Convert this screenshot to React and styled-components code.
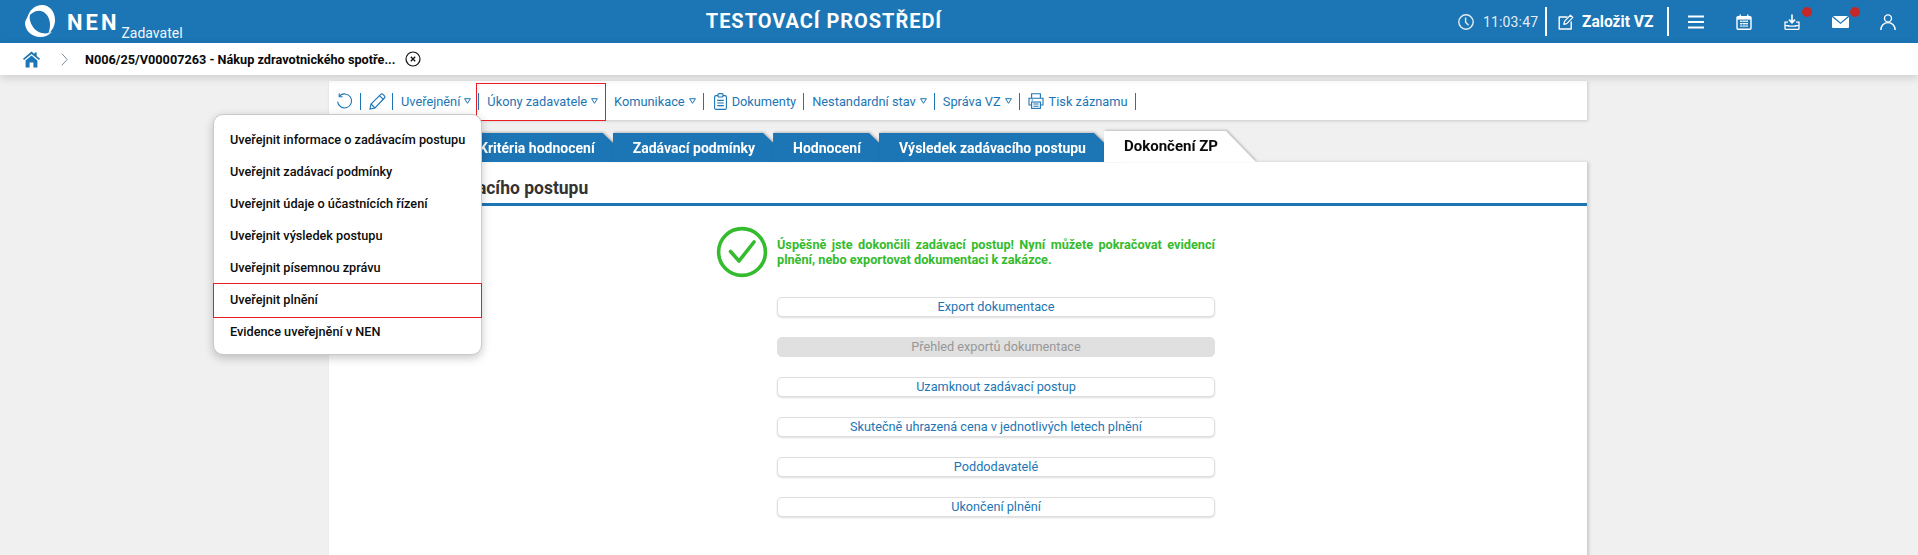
import React from "react";
import styled, { createGlobalStyle } from "styled-components";

const BLUE = "#1c75b4";
const GREEN = "#34bb2e";

const Global = createGlobalStyle`
  html, body { margin: 0; padding: 0; height: 555px; overflow: hidden; background: #f0f0f0; }
  body { font-family: Roboto, "Liberation Sans", sans-serif; font-size: 13px; }
  * { box-sizing: border-box; }
`;

const Page = styled.div`position: relative; height: 555px; overflow: hidden; background: #f0f0f0;`;

const Header = styled.header`
  height: 43px; background: ${BLUE}; color: #fff; display: flex; align-items: center;
`;
const Brand = styled.div`
  width: 193px; flex: none; display: flex; align-items: flex-start; height: 43px; padding: 5px 0 0 25px;
`;
const BrandName = styled.span`
  font-size: 22px; font-weight: 700; letter-spacing: 3px; line-height: 26px; margin: 5px 0 0 12px;
`;
const BrandRole = styled.span`
  font-size: 14px; line-height: 16px; margin: 20px 0 0 2px; color: #f2f7fb;
`;
const EnvTitle = styled.h1`
  flex: 1; margin: 0; text-align: center; font-size: 20px; font-weight: 700; letter-spacing: .95px; line-height: 43px;
`;
const HeaderTools = styled.div`
  flex: none; width: 463px; height: 43px; display: flex; align-items: center; padding-left: 3px;
`;
const Clock = styled.div`
  display: flex; align-items: center; gap: 9px; font-size: 14px; letter-spacing: .15px; color: #e3edf5; width: 87px;
`;
const HeaderRule = styled.i`width: 2px; height: 29px; background: #fff; flex: none;`;
const CreateLink = styled.div`
  display: flex; align-items: center; gap: 8px; font-size: 15.6px; font-weight: 700; padding: 0 0 0 11px; width: 120px; white-space: nowrap;
`;
const HeaderIcons = styled.div`
  display: flex; align-items: center; margin-left: 3px;
`;
const IconSlot = styled.div`
  position: relative; width: 48px; display: flex; justify-content: center; align-items: center; height: 43px; flex: none;
`;
const Dot = styled.i`
  position: absolute; left: 34px; top: 7px; width: 10px; height: 10px; border-radius: 50%; background: #c62828;
`;

const Crumbs = styled.nav`
  position: relative; height: 32px; background: #fff; box-shadow: 0 3px 8px rgba(0,0,0,.14);
  display: flex; align-items: center; padding-left: 23px;
`;
const CrumbTitle = styled.b`
  font-size: 12.7px; font-weight: 700; color: #0a0a0a; margin-left: 17px; width: 320px; white-space: nowrap;
`;

const Column = styled.main`
  width: 1258px; margin: 6px 0 0 329px;
`;
const Toolbar = styled.div`
  height: 39px; background: #fff; box-shadow: 1px 1px 3px rgba(0,0,0,.16);
  display: flex; align-items: center; padding: 1px 0 0 7px; color: ${BLUE};
`;
const ToolItem = styled.div`
  position: relative; height: 17px; display: flex; align-items: center; gap: ${p => p.$gap ?? 4}px;
  padding: ${p => p.$pad ?? "0 7px 0 8px"}; border-right: 1px solid ${BLUE}; white-space: nowrap; font-size: 12.8px; line-height: 17px;
  &::after {
    content: ""; display: ${p => (p.$marked ? "block" : "none")};
    position: absolute; left: -3px; right: -1px; top: -10px; bottom: -11px; border: 1px solid #ea1c24;
  }
`;

const Tabs = styled.div`
  height: 31px; margin-top: 11px; display: flex; align-items: flex-end; padding-left: 130px;
`;
const TabShell = styled.div`
  flex: none; margin-right: -20px; filter: drop-shadow(1px -1px 1px rgba(0,0,0,.22));
`;
const TabFace = styled.div`
  height: ${p => (p.$active ? 31 : 29)}px;
  padding: 0 38px 0 20px;
  background: ${p => (p.$active ? "#fff" : BLUE)};
  color: ${p => (p.$active ? "#0a0a0a" : "#fff")};
  font-size: ${p => (p.$active ? 15 : 14)}px; font-weight: 700; white-space: nowrap;
  line-height: ${p => (p.$active ? 30 : 31)}px;
  clip-path: polygon(0 0, calc(100% - 30px) 0, 100% 100%, 0 100%);
`;

const Panel = styled.section`
  background: #fff; height: 400px; box-shadow: 2px 0 3px rgba(0,0,0,.16);
`;
const PanelTitle = styled.h2`
  margin: 0; height: 44px; border-bottom: 3px solid ${BLUE}; padding: 8px 0 0 14px;
  font-size: 17.5px; font-weight: 700; color: #333; line-height: 36px;
`;
const Body = styled.div`
  width: 500px; margin: 20px 0 0 387px;
`;
const Notice = styled.div`display: flex; align-items: flex-start;`;
const NoticeText = styled.p`
  margin: 11px 0 0 9px; width: 438px; color: ${GREEN}; font-size: 12.7px; font-weight: 700; line-height: 15px; text-align: justify;
`;
const Actions = styled.div`
  margin: 19px 0 0 61px; width: 438px; display: flex; flex-direction: column; gap: 20px;
`;
const Action = styled.button`
  height: 20px; padding: 0; border-radius: 5px; font-family: inherit; font-size: 12.7px; line-height: 18px;
  border: 1px solid ${p => (p.disabled ? "#e0e0e0" : "#dfdfdf")};
  background: ${p => (p.disabled ? "#e0e0e0" : "#fff")};
  color: ${p => (p.disabled ? "#979797" : BLUE)};
  box-shadow: ${p => (p.disabled ? "none" : "0 1px 2px rgba(0,0,0,.14)")};
`;

const Menu = styled.ul`
  position: absolute; left: 213px; top: 114px; width: 269px; margin: 0; padding: 9px 0 6px; list-style: none;
  background: #fff; border: 1px solid #c9c9c9; border-radius: 10px; box-shadow: 0 3px 10px rgba(0,0,0,.22);
`;
const MenuItem = styled.li`
  position: relative; height: 32px; line-height: 31px; padding-left: 16px; font-size: 12.7px; font-weight: 500; color: #0c0c0c; white-space: nowrap;
  &::after {
    content: ""; display: ${p => (p.$marked ? "block" : "none")};
    position: absolute; left: -1px; right: -1px; top: -1px; bottom: -2px; border: 1px solid #ea1c24;
  }
`;

const Svg = ({ w = 16, h = 16, vb, children, ...rest }) => (
  <svg width={w} height={h} viewBox={vb || `0 0 ${w} ${h}`} fill="none" style={{ flex: "none", display: "block" }} {...rest}>{children}</svg>
);

const Logo = () => (
  <Svg w={30} h={32} vb="0 0 30 32">
    <path fill="#fff" d="M2 14C4 5 10 0 17 0c8 0 13 7 13 15 0 6-3 11-7 14 3-6 3-15-2-20C15 3 7 6 2 14z" />
    <path fill="#fff" d="M5 9C1 13 0 17 0 19c1 8 8 13 15 13 5 0 9-2 12-5-7 3-15 1-19-5-3-4-4-9-3-13z" />
  </Svg>
);
const stroke = { stroke: "#fff", strokeWidth: 1.4, strokeLinecap: "round", strokeLinejoin: "round" };
const ClockIcon = () => (
  <Svg><circle cx="8" cy="8" r="7.2" stroke="#e3edf5" strokeWidth="1.4" /><path d="M7.6 3.6v4.6l3 3" stroke="#e3edf5" strokeWidth="1.4" /></Svg>
);
const EditIcon = () => (
  <Svg>
    <path {...stroke} d="M9 3H1.2v12h12V8" />
    <path {...stroke} strokeWidth="1.2" d="M5.8 10.4l.7-3L12.4 1.2l2.4 2.2-6 6.2z" />
  </Svg>
);
const BurgerIcon = () => (
  <Svg h={14}><path d="M0 1.5h16M0 7h16M0 12.5h16" stroke="#fff" strokeWidth="2.2" /></Svg>
);
const CalendarIcon = () => (
  <Svg>
    <rect x="1" y="2.6" width="14" height="12.6" rx="1" stroke="#fff" strokeWidth="1.4" />
    <path d="M1 3h14v2.6H1z" fill="#fff" />
    <path d="M4.2.4v3M11.8.4v3" stroke="#fff" strokeWidth="1.4" />
    <path d="M4 7.2h8M4 9.6h8M4 12h8M5.3 6.8v6M8 6.8v6M10.7 6.8v6" stroke="#fff" strokeWidth="1.2" strokeDasharray="1.3 1" />
  </Svg>
);
const InboxIcon = () => (
  <Svg>
    <path d="M8 .4v8.2M5 5.6l3 3.2 3-3.2" stroke="#fff" strokeWidth="1.6" />
    <path d="M4 8.2H1v6.2a1 1 0 0 0 1 1h12a1 1 0 0 0 1-1V8.2h-3M1 11.6h3.5v.6h7v-.6H15" stroke="#fff" strokeWidth="1.3" />
  </Svg>
);
const MailIcon = () => (
  <Svg w={17} h={12}>
    <path fill="#fff" d="M1 0h15L8.5 6.4zM0 1l8.5 7L17 1v10a1 1 0 0 1-1 1H1a1 1 0 0 1-1-1z" />
  </Svg>
);
const UserIcon = () => (
  <Svg>
    <circle cx="8" cy="4.4" r="3.5" stroke="#fff" strokeWidth="1.4" />
    <path d="M.8 16c0-4.4 3-7.4 7.2-7.4s7.2 3 7.2 7.4" stroke="#fff" strokeWidth="1.4" />
  </Svg>
);
const HomeIcon = () => (
  <Svg w={17} h={17}>
    <path fill={BLUE} d="M8.5.6l3 2.5V1.4h2.2v3.6L17 7.8l-1 1.2L8.5 2.9 1 9 0 7.8z" />
    <path fill={BLUE} d="M2.6 9.4l5.9-4.8 5.9 4.8v7.2h-4V11.4H6.6v5.2h-4z" />
  </Svg>
);
const Chevron = () => (
  <Svg w={7} h={13} style={{ marginLeft: 21, flex: "none", display: "block" }}>
    <path d="M.8.6l5.4 5.9-5.4 5.9" stroke="#7d8a96" strokeWidth="1" />
  </Svg>
);
const CloseIcon = () => (
  <Svg w={16} h={16}>
    <circle cx="8" cy="8" r="7" stroke="#111" strokeWidth="1.2" />
    <path d="M5.8 5.8l4.4 4.4M10.2 5.8l-4.4 4.4" stroke="#111" strokeWidth="1.3" />
  </Svg>
);
const blueS = { stroke: BLUE, strokeWidth: 1.1 };
const RefreshIcon = () => (
  <Svg w={17} h={17}>
    <path {...blueS} d="M3.4 3.2A7 7 0 1 1 1.6 8.6" />
    <path {...blueS} d="M3.2.6v3.2h3.4" />
  </Svg>
);
const PencilIcon = () => (
  <Svg w={17} h={17}>
    <path {...blueS} d="M1 16l1-5L11.8 1.4a1.6 1.6 0 0 1 2.2 0l1.4 1.4a1.6 1.6 0 0 1 0 2.2L6 15z" />
    <path {...blueS} d="M2 11l4 4M10.6 2.8l3.8 3.6" />
  </Svg>
);
const ClipIcon = () => (
  <Svg w={13} h={17}>
    <rect x=".6" y="2.6" width="11.8" height="13.8" rx="1.5" {...blueS} />
    <rect x="4" y=".6" width="5" height="3.4" rx="1" fill="#fff" {...blueS} />
    <path {...blueS} d="M3.2 7.4h6.6M3.2 10h6.6M3.2 12.6h6.6" />
  </Svg>
);
const PrintIcon = () => (
  <Svg w={16} h={16}>
    <path {...blueS} d="M3.6 5V.8h8.8V5M3.6 12H1V5.2h14V12h-2.6" />
    <rect x="3.6" y="9" width="8.8" height="6.4" {...blueS} />
    <path {...blueS} d="M5.4 11h5.2M5.4 13.2h5.2M3.6 7h1.4" />
  </Svg>
);
const Caret = () => (
  <Svg w={7} h={6}><path d="M.6.7h5.8L3.5 5.3z" stroke={BLUE} strokeWidth="1" /></Svg>
);
const CheckIcon = () => (
  <Svg w={52} h={52}>
    <circle cx="26" cy="26" r="23.4" stroke={GREEN} strokeWidth="3.6" />
    <path d="M14.5 25.5l8.5 9.5 15-19" stroke={GREEN} strokeWidth="3.6" strokeLinecap="round" strokeLinejoin="round" />
  </Svg>
);

const tools = [
  { label: "Uveřejnění", caret: true },
  { label: "Úkony zadavatele", caret: true, marked: true },
  { label: "Komunikace", caret: true },
  { label: "Dokumenty", icon: <ClipIcon />, pad: "0 7px 0 10px", gap: 5 },
  { label: "Nestandardní stav", caret: true },
  { label: "Správa VZ", caret: true },
  { label: "Tisk záznamu", icon: <PrintIcon />, pad: "0 7px 0 8px", gap: 5 },
];
const tabs = ["Kritéria hodnocení", "Zadávací podmínky", "Hodnocení", "Výsledek zadávacího postupu"];
const actions = [
  ["Export dokumentace"],
  ["Přehled exportů dokumentace", true],
  ["Uzamknout zadávací postup"],
  ["Skutečně uhrazená cena v jednotlivých letech plnění"],
  ["Poddodavatelé"],
  ["Ukončení plnění"],
];
const menu = [
  "Uveřejnit informace o zadávacím postupu",
  "Uveřejnit zadávací podmínky",
  "Uveřejnit údaje o účastnících řízení",
  "Uveřejnit výsledek postupu",
  "Uveřejnit písemnou zprávu",
  "Uveřejnit plnění",
  "Evidence uveřejnění v NEN",
];

export default function App() {
  return (
    <Page>
      <Global />
      <Header>
        <Brand>
          <Logo />
          <BrandName>NEN</BrandName>
          <BrandRole>Zadavatel</BrandRole>
        </Brand>
        <EnvTitle>TESTOVACÍ PROSTŘEDÍ</EnvTitle>
        <HeaderTools>
          <Clock><ClockIcon />11:03:47</Clock>
          <HeaderRule />
          <CreateLink><EditIcon />Založit VZ</CreateLink>
          <HeaderRule />
          <HeaderIcons>
            <IconSlot><BurgerIcon /></IconSlot>
            <IconSlot><CalendarIcon /></IconSlot>
            <IconSlot><InboxIcon /><Dot /></IconSlot>
            <IconSlot><MailIcon /><Dot /></IconSlot>
            <IconSlot><UserIcon /></IconSlot>
          </HeaderIcons>
        </HeaderTools>
      </Header>
      <Crumbs>
        <HomeIcon />
        <Chevron />
        <CrumbTitle>N006/25/V00007263 - Nákup zdravotnického spotře...</CrumbTitle>
        <CloseIcon />
      </Crumbs>
      <Column>
        <Toolbar>
          <ToolItem $pad="0 7px 0 0"><RefreshIcon /></ToolItem>
          <ToolItem $pad="0 6px 0 8px"><PencilIcon /></ToolItem>
          {tools.map(t => (
            <ToolItem key={t.label} $marked={t.marked} $pad={t.pad} $gap={t.gap}>
              {t.icon}
              {t.label}
              {t.caret && <Caret />}
            </ToolItem>
          ))}
        </Toolbar>
        <Tabs>
          {tabs.map(t => (
            <TabShell key={t}><TabFace>{t}</TabFace></TabShell>
          ))}
          <TabShell><TabFace $active>Dokončení ZP</TabFace></TabShell>
        </Tabs>
        <Panel>
          <PanelTitle>Dokončení zadávacího postupu</PanelTitle>
          <Body>
            <Notice>
              <CheckIcon />
              <NoticeText>Úspěšně jste dokončili zadávací postup! Nyní můžete pokračovat evidencí plnění, nebo exportovat dokumentaci k zakázce.</NoticeText>
            </Notice>
            <Actions>
              {actions.map(([label, disabled]) => (
                <Action key={label} disabled={disabled}>{label}</Action>
              ))}
            </Actions>
          </Body>
        </Panel>
      </Column>
      <Menu>
        {menu.map(m => (
          <MenuItem key={m} $marked={m === "Uveřejnit plnění"}>{m}</MenuItem>
        ))}
      </Menu>
    </Page>
  );
}
